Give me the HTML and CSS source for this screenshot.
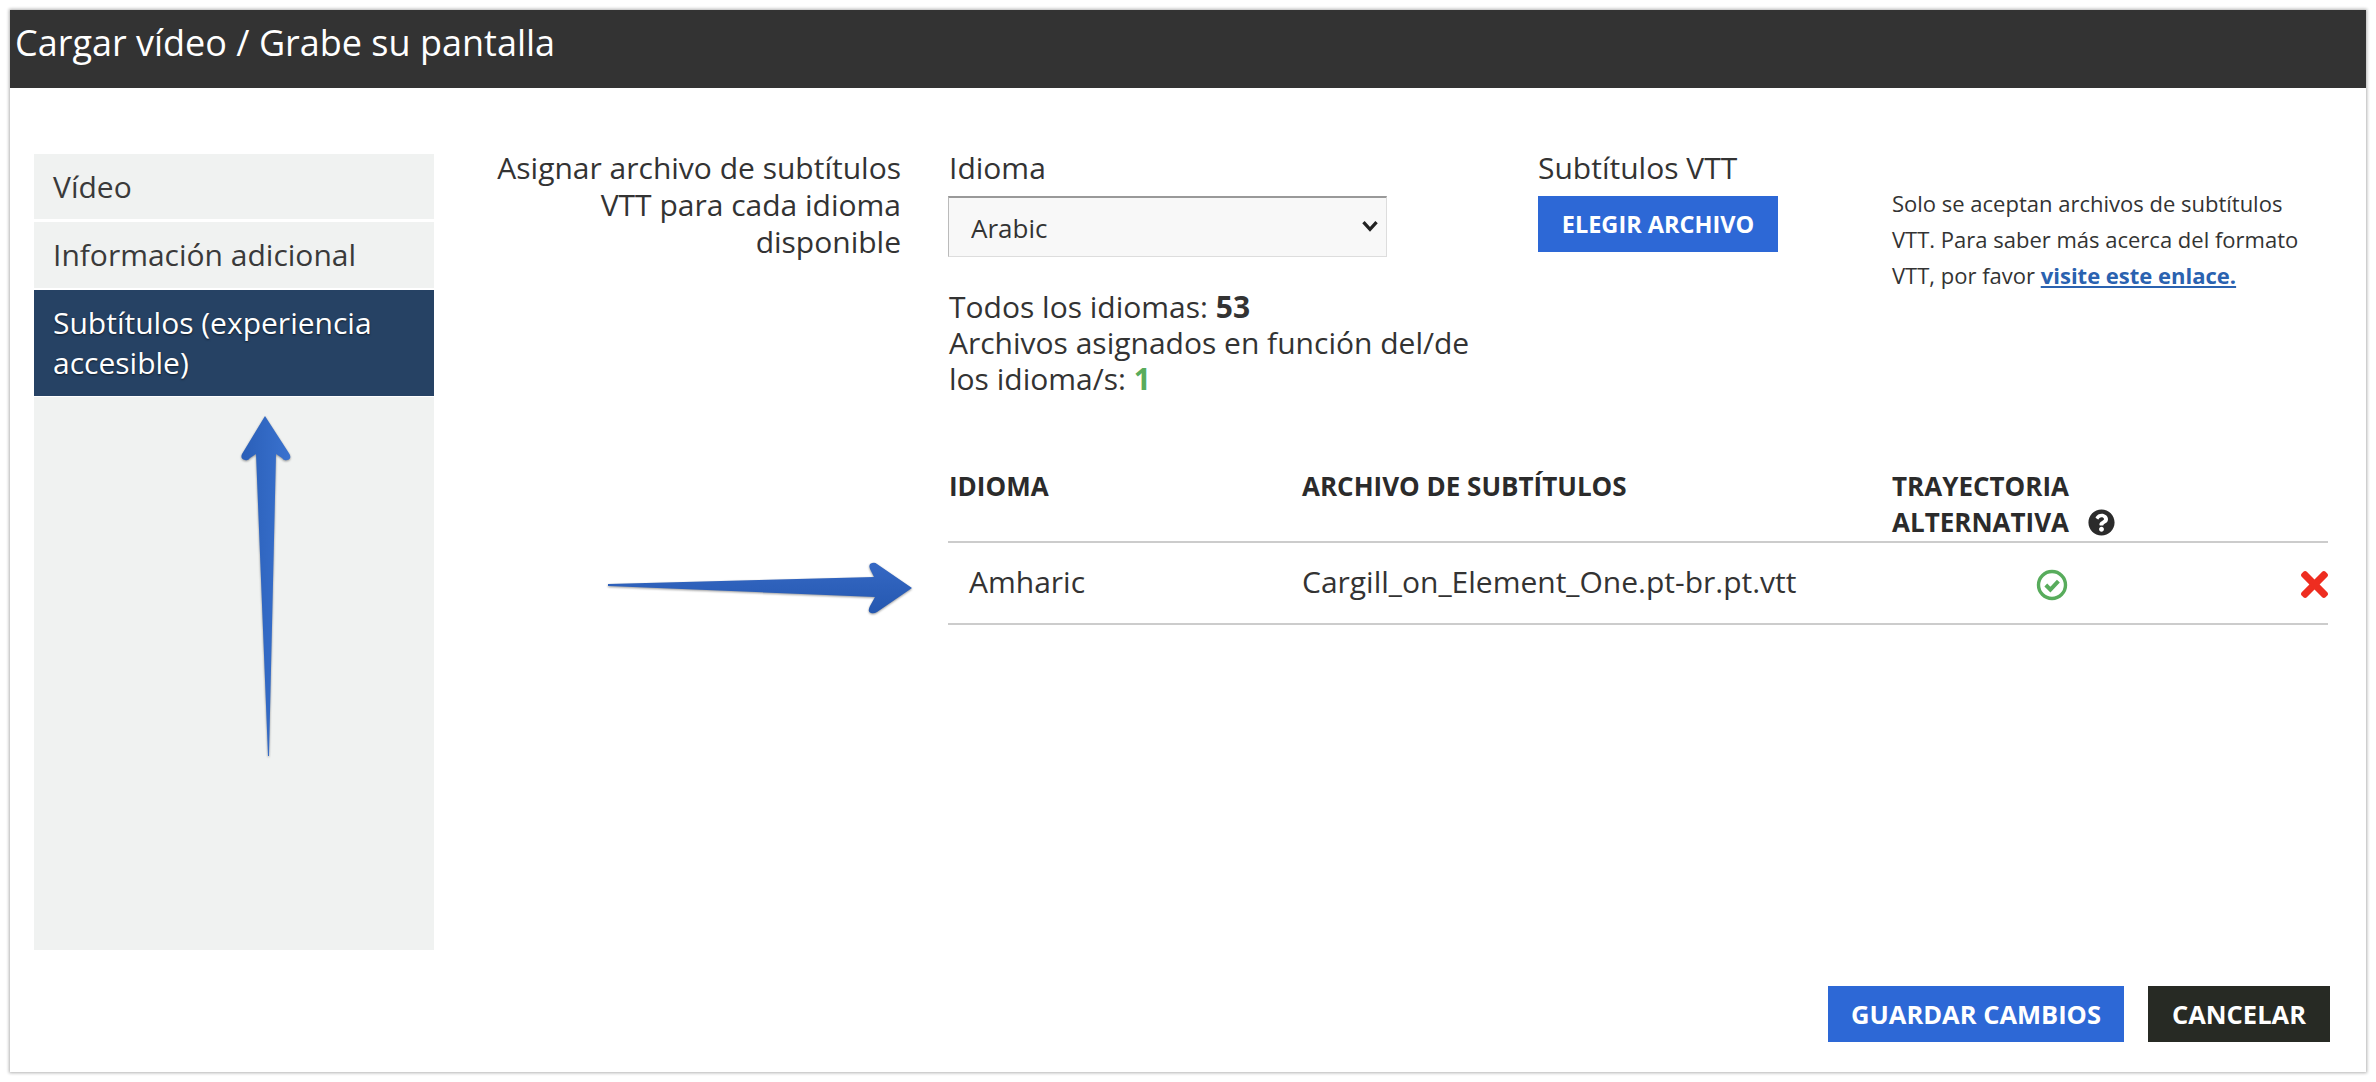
FILE: index.html
```html
<!DOCTYPE html>
<html lang="es">
<head>
<meta charset="utf-8">
<title>Cargar vídeo</title>
<link rel="stylesheet" href="styles.css">
</head>
<body>
<div class="window">
  <header class="title">Cargar vídeo / Grabe su pantalla</header>
  <div class="content">
    <nav class="side">
      <a class="side-item">Vídeo</a>
      <a class="side-item">Información adicional</a>
      <a class="side-item active">Subtítulos (experiencia accesible)</a>
      <div class="side-rest"></div>
    </nav>
    <div class="label">Asignar archivo de subtítulos VTT para cada idioma disponible</div>
    <div class="panel">
      <div class="form-row">
        <div class="lang-col">
          <div class="field-label">Idioma</div>
          <div class="select-wrap">
            <select class="select"><option>Arabic</option></select>
            <svg class="chevron" viewBox="0 0 16 11"><path d="M2 2l6 6.5L14 2" fill="none" stroke="#222" stroke-width="3"/></svg>
          </div>
          <p class="counts">Todos los idiomas: <b>53</b><br>Archivos asignados en función del/de los idioma/s: <b class="green">1</b></p>
        </div>
        <div class="vtt-col">
          <div class="field-label">Subtítulos VTT</div>
          <button class="btn blue choose">ELEGIR ARCHIVO</button>
        </div>
        <p class="note">Solo se aceptan archivos de subtítulos VTT. Para saber más acerca del formato VTT, por favor <a class="link">visite este enlace.</a></p>
      </div>
      <table class="table">
        <thead>
          <tr>
            <th class="c1">IDIOMA</th>
            <th class="c2">ARCHIVO DE SUBTÍTULOS</th>
            <th class="c3">TRAYECTORIA<br>ALTERNATIVA
              <svg class="help" viewBox="0 0 512 512"><path fill="#2b2b2b" d="M504 256c0 136.997-111.043 248-248 248S8 392.997 8 256C8 119.083 119.043 8 256 8s248 111.083 248 248zM262.655 90c-54.497 0-89.255 22.957-116.549 63.758-3.536 5.286-2.353 12.415 2.715 16.258l34.699 26.31c5.205 3.947 12.621 3.008 16.665-2.122 17.864-22.658 30.113-35.797 57.303-35.797 20.429 0 45.698 13.148 45.698 32.958 0 14.976-12.363 22.667-32.534 33.976C247.128 238.528 216 254.941 216 296v4c0 6.627 5.373 12 12 12h56c6.627 0 12-5.373 12-12v-1.333c0-28.462 83.186-29.647 83.186-106.667 0-58.002-60.165-102-116.531-102zM256 338c-25.365 0-46 20.635-46 46 0 25.364 20.635 46 46 46s46-20.636 46-46c0-25.365-20.635-46-46-46z"/></svg>
            </th>
            <th class="c4"></th>
          </tr>
        </thead>
        <tbody>
          <tr>
            <td class="lang">Amharic</td>
            <td>Cargill_on_Element_One.pt-br.pt.vtt</td>
            <td class="center">
              <svg class="check" viewBox="0 0 32 32"><circle cx="16" cy="16" r="13.5" fill="none" stroke="#58ac5c" stroke-width="3.4"/><path d="M9.8 16l4.6 4.6 8-8.4" fill="none" stroke="#58ac5c" stroke-width="4"/></svg>
            </td>
            <td class="right">
              <svg class="remove" viewBox="0 80 352 352"><path fill="#ee2d20" d="M242.72 256l100.07-100.07c12.28-12.28 12.28-32.19 0-44.48l-22.24-22.24c-12.28-12.28-32.19-12.28-44.48 0L176 189.28 75.93 89.21c-12.28-12.28-32.19-12.28-44.48 0L9.21 111.45c-12.28 12.28-12.28 32.19 0 44.48L109.28 256 9.21 356.07c-12.28 12.28-12.28 32.19 0 44.48l22.24 22.24c12.28 12.28 32.2 12.28 44.48 0L176 322.72l100.07 100.07c12.28 12.28 32.2 12.28 44.48 0l22.24-22.24c12.28-12.28 12.28-32.19 0-44.48L242.72 256z"/></svg>
            </td>
          </tr>
        </tbody>
      </table>
    </div>
  </div>
  <footer class="footer">
    <button class="btn blue save">GUARDAR CAMBIOS</button>
    <button class="btn dark cancel">CANCELAR</button>
  </footer>
  <svg class="arrow arrow-up" viewBox="0 0 56 344">
    <defs>
      <linearGradient id="gu" x1="0" y1="0" x2="1" y2="0"><stop offset="0" stop-color="#2a5fb8"/><stop offset="1" stop-color="#3a72cf"/></linearGradient>
      <linearGradient id="gr" x1="0" y1="0" x2="0" y2="1"><stop offset="0" stop-color="#3568c4"/><stop offset="1" stop-color="#2558b0"/></linearGradient>
    </defs>
    <path fill="url(#gu)" d="M27 2L51.5 40Q54 45 49 46Q46 47 44 44L38 40L31 342H30L18 40L12 44Q10 47 7 46Q2 45 4 40Z"/>
  </svg>
  <svg class="arrow arrow-right" viewBox="0 0 306 56">
    <path fill="url(#gr)" d="M0 24L266 17L262 9Q260 4 264 3Q267 2 269 4L304 28L269 52Q266 54 263 53Q259 52 262 46L267 37L0 26Z"/>
  </svg>
</div>
</body>
</html>
```
FILE: styles.css
```css
* { box-sizing: border-box; }
html, body { margin: 0; padding: 0; background: #fff; }
body { font-family: "Open Sans", sans-serif; color: #333; width: 2376px; height: 1082px; overflow: hidden; }
.window { position: relative; margin: 10px 0 0 10px; width: 2356px; height: 1062px; background: #fff; box-shadow: 0 0 3px 1px rgba(0,0,0,.3); display: flex; flex-direction: column; }
.title { height: 78px; background: #333; color: #fff; font-size: 36px; line-height: 66px; padding-left: 5px; }
.content { display: grid; grid-template-columns: 400px 467px 1fr; column-gap: 0; padding: 66px 38px 0 24px; height: 862px; }
.side { display: flex; flex-direction: column; height: 796px; font-size: 30px; line-height: 39.5px; }
.side-item { display: block; background: #f0f2f1; padding: 13px 19px; color: #3a3a3a; }
.side-item:nth-child(1) { height: 65px; margin-bottom: 3px; }
.side-item:nth-child(2) { height: 66px; margin-bottom: 2px; }
.side-item.active { height: 106px; margin-bottom: 1px; background: #264264; color: #fff; text-shadow: 0 1px 2px rgba(0,0,0,.6); }
.side-rest { flex: 1; background: #f0f2f1; }
.label { font-size: 30px; line-height: 37px; text-align: right; padding-left: 50px; margin-top: -5px; }
.panel { margin-left: 47px; }
.form-row { display: flex; height: 314px; }
.lang-col { width: 590px; padding-left: 1px; }
.vtt-col { width: 354px; }
.field-label { font-size: 30px; line-height: 37px; height: 47px; margin-top: -5px; }
.select-wrap { position: relative; width: 439px; height: 61px; margin-left: -1px; }
.select { display: block; width: 100%; height: 100%; appearance: none; border: 1px solid #ddd; border-top: 2px solid #999; border-left-color: #bbb; border-radius: 0; background: #f8f8f8; font: 26px "Open Sans", sans-serif; color: #333; padding: 2px 0 0 22px; }
.chevron { position: absolute; right: 8px; top: 24px; width: 18px; height: 12px; }
.counts { margin: 32px 0 0; font-size: 30px; line-height: 36px; width: 540px; }
.counts b { font-weight: 700; }
.green { color: #58ac5c; }
.btn { border: 0; border-radius: 0; color: #fff; font-family: "Open Sans", sans-serif; font-weight: 700; font-size: 25.5px; height: 56px; padding: 0; }
.blue { background: #2d68d6; }
.dark { background: #272a24; }
.choose { display: block; width: 240px; font-size: 23.5px; }
.note { margin: 31px 0 0; font-size: 22px; line-height: 36px; width: 420px; }
.link { color: #2a62b0; font-weight: 700; text-decoration: underline; }
.table { border-collapse: collapse; width: 1380px; table-layout: fixed; }
.table th { text-align: left; font-size: 26px; font-weight: 700; line-height: 36px; padding: 0 0 1px; vertical-align: top; color: #2b2b2b; }
.table th.c1 { padding-left: 1px; }
.table thead tr { height: 73px; border-bottom: 2px solid #ccc; }
.c1 { width: 354px; }
.c2 { width: 590px; }
.c3 { width: 340px; }
.table td { font-size: 30px; height: 82px; border-bottom: 2px solid #ccc; padding: 0 0 3px; }
.table td.lang { padding-left: 21px; }
.center { text-align: center; }
.right { text-align: right; }
.help { width: 27px; height: 27px; vertical-align: -4px; margin-left: 12px; }
.check { width: 32px; height: 32px; vertical-align: middle; margin-left: -20px; }
.remove { width: 27px; height: 27px; vertical-align: middle; }
.footer { display: flex; justify-content: flex-end; gap: 24px; padding-right: 36px; margin-top: 36px; }
.save { width: 296px; }
.cancel { width: 182px; }
.arrow { position: absolute; overflow: visible; filter: drop-shadow(0 1px 1px rgba(0,0,0,.4)); }
.arrow-up { left: 228px; top: 404px; width: 56px; height: 344px; }
.arrow-right { left: 598px; top: 550px; width: 306px; height: 56px; }
```
